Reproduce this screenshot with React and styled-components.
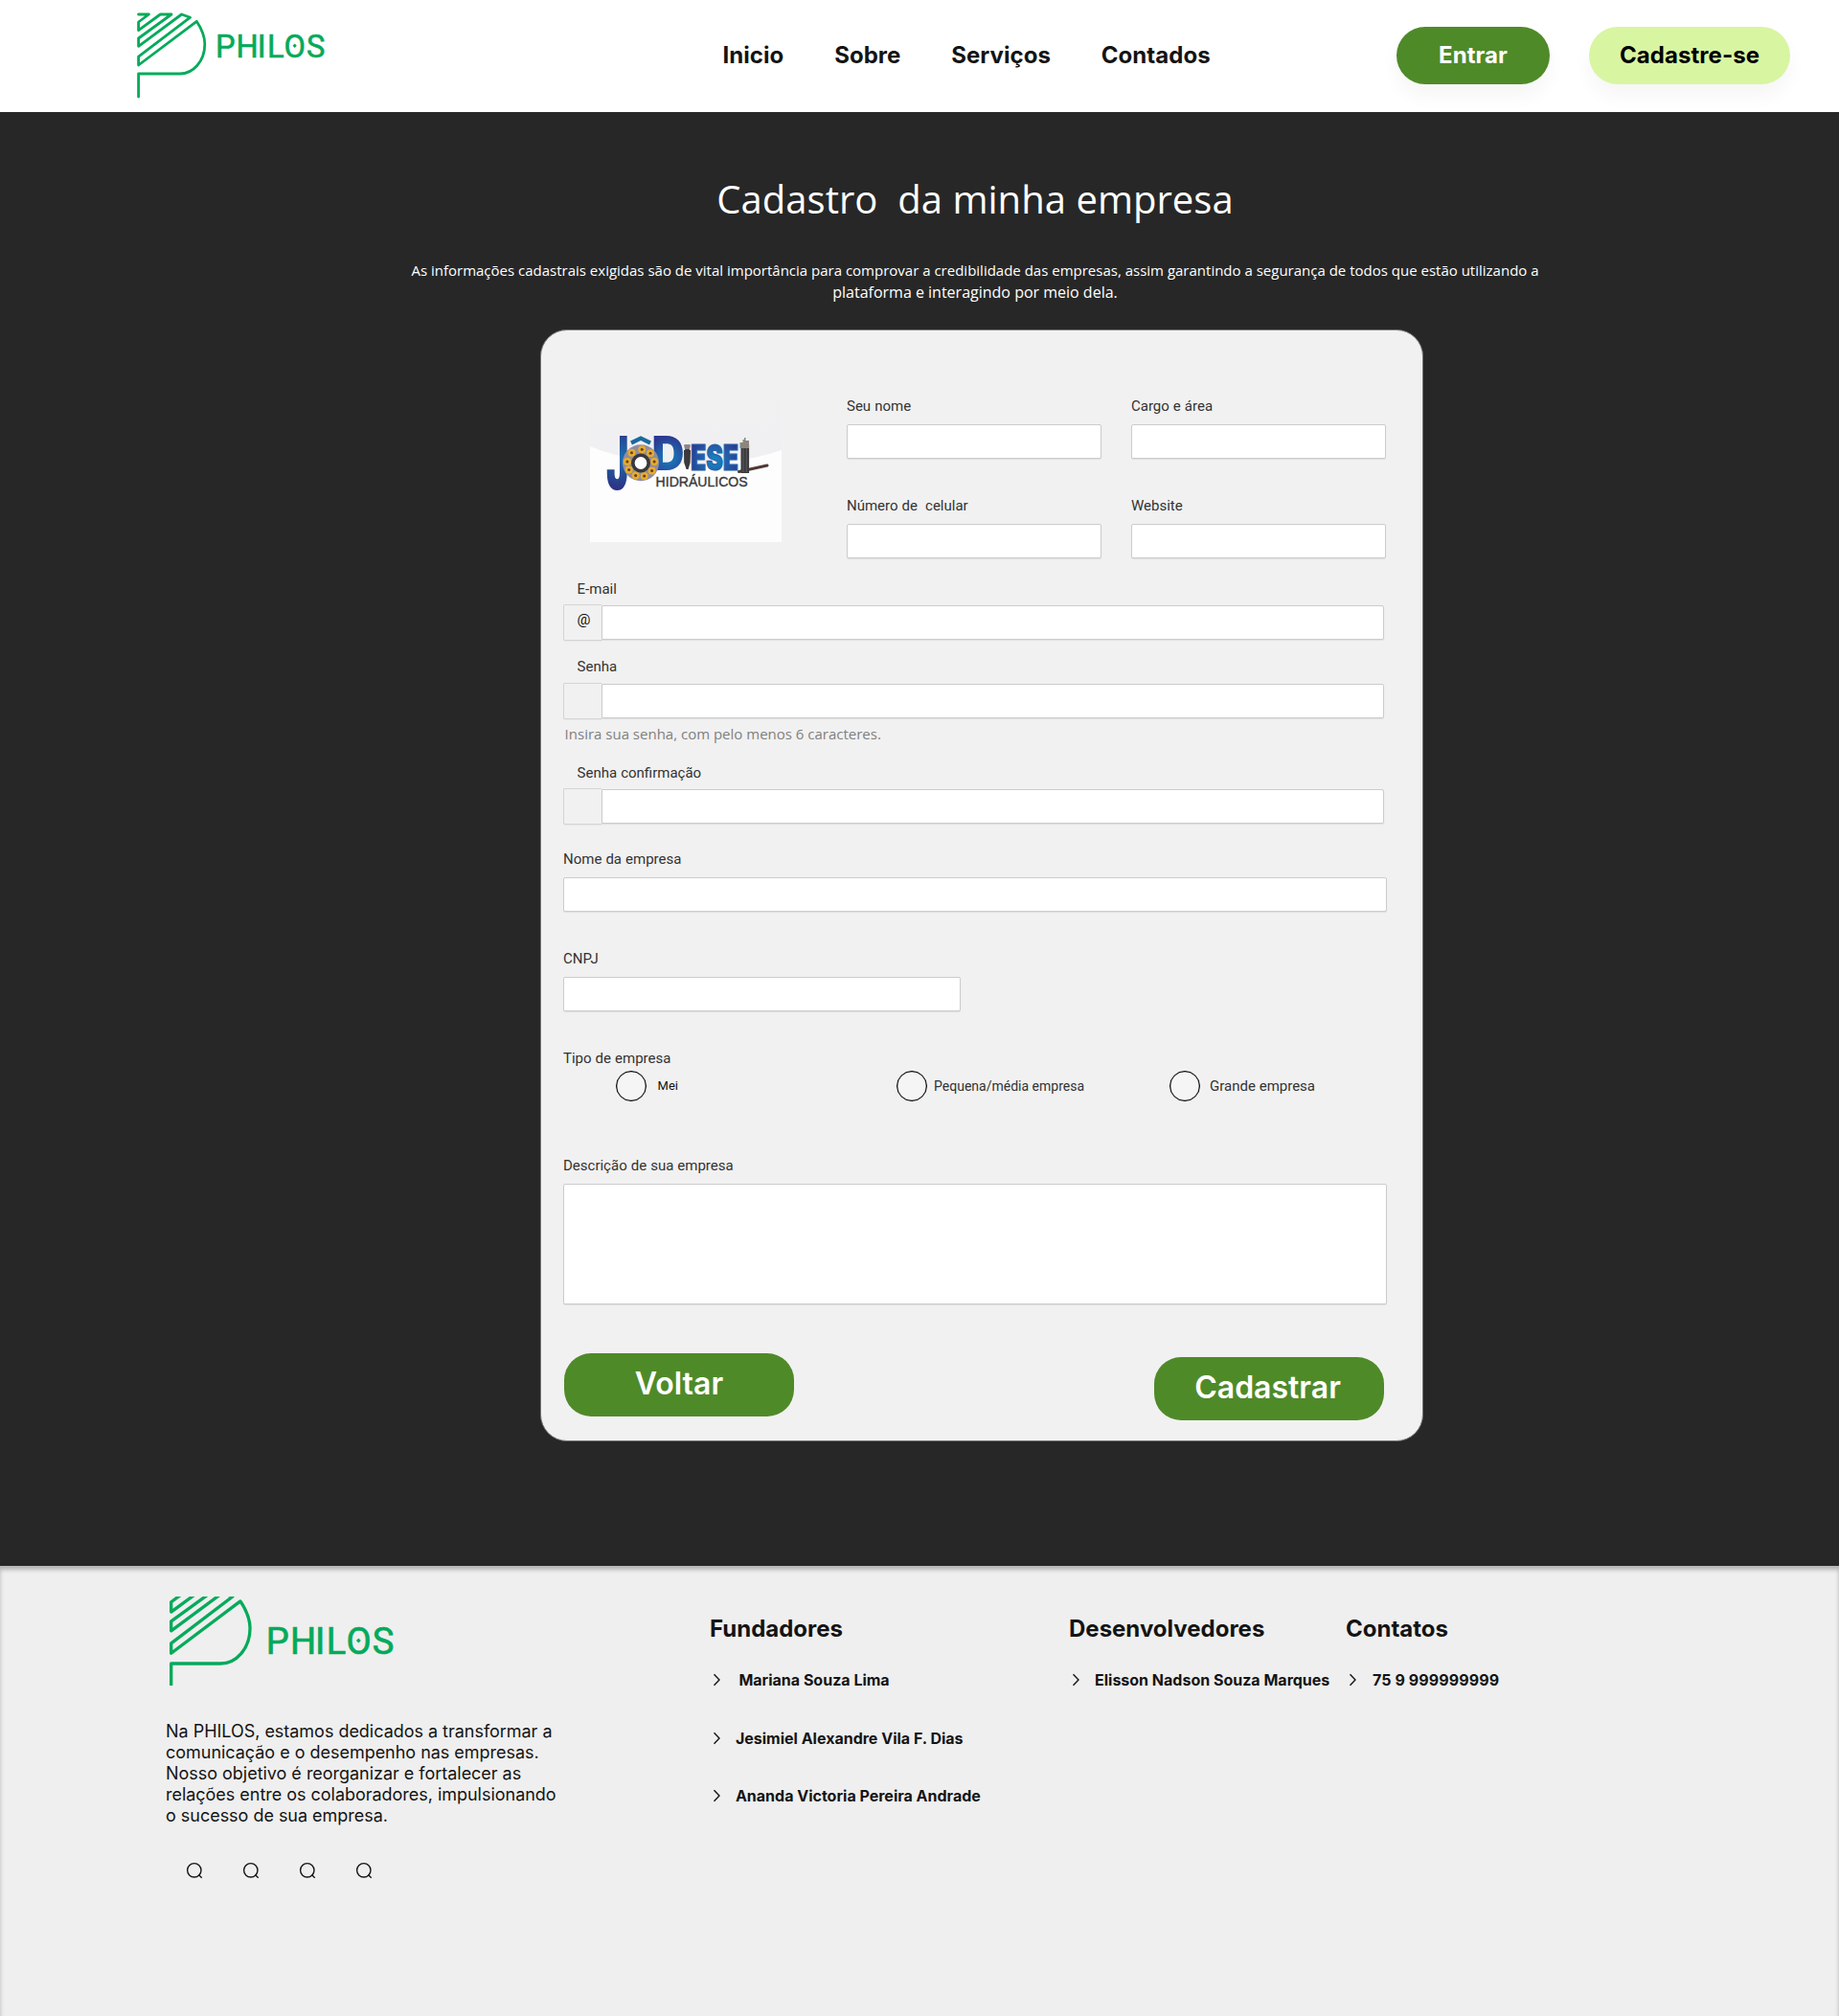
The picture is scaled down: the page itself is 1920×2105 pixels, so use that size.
import React from "react";
import styled, { createGlobalStyle } from "styled-components";

const GlobalStyle = createGlobalStyle`
  *, *::before, *::after { box-sizing: border-box; }
  body {
    margin: 0;
    background: #272727;
    font-family: Inter, "Liberation Sans", sans-serif;
  }
  p, h1, h2, ul { margin: 0; padding: 0; }
`;

const Page = styled.div`
  width: 1920px;
  min-height: 2105px;
  display: flex;
  flex-direction: column;
`;

/* ---------- Header ---------- */

const Header = styled.header`
  height: 117px;
  flex: none;
  display: flex;
  align-items: flex-start;
  padding-left: 140px;
  background: #fff;
  overflow: hidden;
`;

const HeaderBrand = styled.div`
  width: 614px;
  height: 117px;
  svg { display: block; }
`;

const Nav = styled.nav`
  width: 704px;
  display: flex;
  gap: 52.8px;
  padding: 43px 0 0 0.5px;
`;

const NavLink = styled.a`
  font-size: 24px;
  line-height: 29px;
  font-weight: 700;
  letter-spacing: 0.05px;
  color: #141414;
  text-decoration: none;
`;

const HeaderActions = styled.div`
  display: flex;
  gap: 41px;
  padding-top: 28px;
`;

const PillButton = styled.button`
  width: ${(p) => p.$width}px;
  height: 60px;
  padding: 0 0 1px;
  border: 0;
  border-radius: 30px;
  background: ${(p) => (p.$light ? "#d8f5a2" : "#4f8a29")};
  color: ${(p) => (p.$light ? "#000" : "#fff")};
  font: 700 24px/29px Inter, "Liberation Sans", sans-serif;
  letter-spacing: 0.06px;
  box-shadow: 0 12px 20px rgba(0, 0, 0, 0.04);
`;

/* ---------- Main ---------- */

const Main = styled.main`
  height: 1518px;
  flex: none;
  padding-top: 63px;
  background: #272727;
`;

const Intro = styled.section`
  width: 1240px;
  margin-left: 398px;
  height: 164px;
  text-align: center;
  color: #fff;
  font-family: "Open Sans", "Noto Sans", sans-serif;
`;

const Title = styled.h1`
  font-size: 40px;
  line-height: 55px;
  font-weight: 400;
  letter-spacing: 0.03px;
  white-space: pre;
`;

const Lead = styled.p`
  margin-top: ${(p) => p.$top || 0}px;
  font-size: ${(p) => p.$size}px;
  line-height: 23px;
  white-space: nowrap;
`;

const Card = styled.form`
  width: 922px;
  height: 1161px;
  margin-left: 564px;
  padding: 21px 0 0 23px;
  border: 1px solid #777;
  border-radius: 28px;
  background: #f1f1f1;
  display: flex;
  flex-direction: column;
  align-items: flex-start;
`;

const TopRow = styled.div`
  height: 217px;
  display: flex;
  gap: 68px;
  padding-left: 28px;
`;

const Photo = styled.div`
  width: 200px;
  height: 200px;
  svg { display: block; }
`;

const FieldGrid = styled.div`
  display: grid;
  grid-template-columns: 266px 266px;
  align-content: start;
  gap: 40px 31px;
  padding-top: 49px;
`;

const Field = styled.div`
  display: flex;
  flex-direction: column;
  gap: ${(p) => p.$gap || 10}px;
  margin-top: ${(p) => p.$top || 0}px;
  width: ${(p) => (p.$width ? p.$width + "px" : "auto")};
`;

const Label = styled.label`
  height: 18px;
  padding-left: ${(p) => p.$indent || 0}px;
  font: 400 15px/18px Roboto, "Liberation Sans", sans-serif;
  word-spacing: 0.3px;
  color: #333;
  white-space: pre;
`;

const Input = styled.input`
  display: block;
  width: 100%;
  height: 36px;
  padding: 0 10px;
  border: 1px solid #ccc;
  border-radius: 2px;
  background: #fff;
  box-shadow: 0 1px 1px rgba(0, 0, 0, 0.08);
`;

const TextArea = styled.textarea`
  display: block;
  width: 100%;
  height: 126px;
  padding: 10px;
  border: 1px solid #ccc;
  border-radius: 2px;
  background: #fff;
  resize: none;
  box-shadow: 0 1px 1px rgba(0, 0, 0, 0.08);
`;

const AddonRow = styled.div`
  display: flex;
  align-items: center;
  input {
    flex: 1;
    border-radius: 0 2px 2px 0;
  }
`;

const Addon = styled.span`
  width: 40px;
  height: 38px;
  padding: 6px 0 0 13.6px;
  border: 1px solid #d4d4d4;
  border-right: 0;
  border-radius: 2px 0 0 2px;
  background: #f1f1f1;
  box-shadow: 0 1px 1px rgba(0, 0, 0, 0.04);
  font: 400 15.5px/19px Roboto, "Liberation Sans", sans-serif;
  color: #111;
`;

const Hint = styled.p`
  margin: 5px 0 0 1.6px;
  font: 400 15px/20px "Open Sans", "Noto Sans", sans-serif;
  color: #808080;
`;

const RadioRow = styled.div`
  display: flex;
  margin-top: 4px;
  padding-left: 55px;
`;

const RadioOption = styled.label`
  width: ${(p) => p.$width}px;
  display: flex;
  align-items: center;
  gap: ${(p) => p.$gap}px;
  color: ${(p) => p.$color || "#333"};
  font: 400 ${(p) => p.$size}px/${(p) => p.$line || 18}px Roboto, "Liberation Sans", sans-serif;
`;

const RadioCircle = styled.input.attrs({ type: "radio", name: "tipo" })`
  appearance: none;
  flex: none;
  width: 32px;
  height: 32px;
  margin: 0;
  border: 1px solid #000;
  border-radius: 50%;
  background: #f5f5f5;
  box-shadow: inset 0 0 0 0.5px rgba(0, 0, 0, 0.5);
`;

const Actions = styled.div`
  width: 856px;
  margin: 51px 0 0 1px;
  display: flex;
  justify-content: space-between;
  align-items: flex-start;
`;

const ActionButton = styled.button`
  width: 240px;
  height: 66.4px;
  margin-top: ${(p) => p.$drop || 0}px;
  padding: 0 ${(p) => p.$right || 0}px 3px 0;
  border: 0;
  border-radius: 28px;
  background: #4f8a29;
  color: #fff;
  font: 600 32px/39px Inter, "Liberation Sans", sans-serif;
`;

/* ---------- Footer ---------- */

const Footer = styled.footer`
  height: 470px;
  flex: none;
  display: grid;
  grid-template-columns: 568px 375px 289px 1fr;
  padding-left: 173px;
  background: #efefef;
  box-shadow: inset 0 4px 4px rgba(0, 0, 0, 0.25);
  color: #141414;
`;

const About = styled.section`
  padding-top: 32px;
  > svg { display: block; }
`;

const AboutText = styled.p`
  width: 414px;
  margin-top: 36.5px;
  font-size: 18px;
  line-height: 22px;
  letter-spacing: -0.025px;
`;

const SocialRow = styled.div`
  display: flex;
  gap: 39px;
  margin-top: 36px;
  padding-left: 20px;
  svg { display: block; }
`;

const LinkColumn = styled.section`
  padding-top: 51px;
`;

const ColumnTitle = styled.h2`
  font-size: 24px;
  line-height: 29px;
  font-weight: 700;
`;

const LinkList = styled.ul`
  list-style: none;
  margin-top: 29px;
  display: flex;
  flex-direction: column;
  gap: 40.6px;
`;

const LinkItem = styled.li`
  height: 20px;
  display: flex;
  align-items: center;
  gap: ${(p) => p.$gap || 15}px;
  padding-left: 3.4px;
  font-size: 16px;
  line-height: 20px;
  font-weight: 700;
  letter-spacing: ${(p) => p.$spacing || 0}px;
  white-space: nowrap;
  svg { display: block; flex: none; }
`;

/* ---------- Drawings ---------- */

const GREEN = "#05aa5b";

function PhilosMark() {
  return (
    <path
      d="M0 -62H10.8L0 -54V-45.3L22.8 -62H34.4L0 -37V-28.7L45 -62L54 -58.8L0 -17.8V-9L60.7 -54.7C66.5 -46 69.2 -38.5 69.2 -31C69.2 -13 57 0 43.3 0H0V24"
      fill="none"
      stroke={GREEN}
      strokeWidth="2.8"
      strokeLinejoin="round"
      strokeLinecap="round"
    />
  );
}

function PhilosWord() {
  return (
    <g fill={GREEN}>
      <text
        x="-2 19.6 41.8 52 69.6 93"
        y="0"
        fontFamily="Roboto, sans-serif"
        fontSize="32.6"
        stroke={GREEN}
        strokeWidth="0.6"
      >
        PHILOS
      </text>
      <path d="M80.7 -14.2L82.8 -12L80.7 -9.8L78.6 -12Z" />
    </g>
  );
}

function HeaderLogo() {
  return (
    <svg width="210" height="110" viewBox="140 0 210 110" role="img">
      <g transform="translate(144.6 77)"><PhilosMark /></g>
      <g transform="translate(227 59.8)"><PhilosWord /></g>
    </svg>
  );
}

function FooterLogo() {
  return (
    <svg width="250" height="93" viewBox="173 1667 250 93" role="img">
      <g transform="translate(178.7 1737) scale(1.19)"><PhilosMark /></g>
      <g transform="translate(280.2 1727) scale(1.167)"><PhilosWord /></g>
    </svg>
  );
}

const BALLS = [85, 45, 5, -35, -75, -112, -150, 175, 132];

function CompanyPhoto() {
  return (
    <svg width="200" height="200" viewBox="0 0 200 200" role="img">
      <defs>
        <linearGradient id="haze" x1="0" y1="0" x2="0" y2="1">
          <stop offset="0" stopColor="#f1f1f1" />
          <stop offset="0.5" stopColor="#f0f0f2" />
        </linearGradient>
        <radialGradient id="blueJ" gradientUnits="userSpaceOnUse" cx="32" cy="112" r="36">
          <stop offset="0" stopColor="#1a6fb0" />
          <stop offset="1" stopColor="#2f2c80" />
        </radialGradient>
        <radialGradient id="blueD" gradientUnits="userSpaceOnUse" cx="82" cy="112" r="22">
          <stop offset="0" stopColor="#1583bf" />
          <stop offset="1" stopColor="#2c3a92" />
        </radialGradient>
        <radialGradient id="blueE" gradientUnits="userSpaceOnUse" cx="130" cy="115" r="28">
          <stop offset="0" stopColor="#1689c4" />
          <stop offset="1" stopColor="#2d3690" />
        </radialGradient>
      </defs>
      <rect width="200" height="200" fill="url(#haze)" />
      <path d="M0 100C60 124 140 124 200 104V200H0Z" fill="#fdfdfe" />
      <g fontFamily="Inter, sans-serif" fontWeight="900">
        <text x="17" y="145" fontSize="77" textLength="23.5" lengthAdjust="spacingAndGlyphs" fill="url(#blueJ)">J</text>
        <text x="64.5" y="125.2" fontSize="49" textLength="34" lengthAdjust="spacingAndGlyphs" fill="url(#blueD)">D</text>
        <text x="105" y="125.4" fontSize="37.5" textLength="50" lengthAdjust="spacingAndGlyphs" fill="url(#blueE)" stroke="#2560a8" strokeWidth="1.2">ESE</text>
      </g>
      <path d="M43 96.5L53 91.5L63 96.5" fill="none" stroke="#1a6a9c" strokeWidth="4.2" />
      <circle cx="53" cy="117.3" r="19" fill="#938ba0" />
      {BALLS.map((deg) => {
        const a = (deg * Math.PI) / 180;
        const x = 53 + 14.2 * Math.cos(a);
        const y = 117.3 - 14.2 * Math.sin(a);
        return (
          <g key={deg}>
            <circle cx={x} cy={y} r="4" fill="#e2ae2c" />
            <circle cx={x} cy={y} r="1.5" fill="#6e3a22" />
          </g>
        );
      })}
      <circle cx="53" cy="117.5" r="8.2" fill="#fdfdfe" stroke="#3a383c" strokeWidth="3.6" />
      <path d="M98.5 98.5H104.5L103.8 104H105L104.6 117L102.6 124H100.6L98.2 117L98 104H99.2Z" fill="#3a393d" />
      <path d="M98.5 98.5H104.5L104 103H99Z" fill="#8b8592" />
      <path d="M155.5 126.5L185 120" stroke="#4f3834" strokeWidth="3" strokeLinecap="round" />
      <rect x="157.5" y="98" width="8.6" height="30" fill="#3b3a3c" />
      <path d="M160 100V127M163.3 100V127" stroke="#66646a" strokeWidth="0.8" />
      <path d="M156.5 96H159.5V93H161V91H162.5V94H166V102H156.5Z" fill="#8c867f" />
      <text x="68.6" y="141.6" fontFamily="Liberation Sans, Arial, sans-serif" fontSize="15" textLength="96" lengthAdjust="spacingAndGlyphs" fill="#39393b" stroke="#39393b" strokeWidth="0.4">HIDRÁULICOS</text>
    </svg>
  );
}

function Chevron() {
  return (
    <svg width="8" height="14" viewBox="0 0 8 14">
      <path d="M1.5 1.2L7 7L1.5 12.8" fill="none" stroke="#141414" strokeWidth="1.4" />
    </svg>
  );
}

function SocialIcon() {
  return (
    <svg width="20" height="20" viewBox="0 0 20 20">
      <circle cx="9.8" cy="9.8" r="7.2" fill="none" stroke="#141414" strokeWidth="1.4" />
      <path d="M14.4 14.4L17.7 17.7" stroke="#141414" strokeWidth="1.4" />
    </svg>
  );
}

/* ---------- Composition ---------- */

function TextField({ label, ...box }) {
  return (
    <Field {...box}>
      <Label>{label}</Label>
      <Input />
    </Field>
  );
}

function AddonField({ label, symbol, type, ...box }) {
  return (
    <Field $width={857} {...box}>
      <Label $indent={14.6}>{label}</Label>
      <AddonRow>
        <Addon>{symbol}</Addon>
        <Input type={type} />
      </AddonRow>
    </Field>
  );
}

function FooterColumn({ title, items }) {
  return (
    <LinkColumn>
      <ColumnTitle>{title}</ColumnTitle>
      <LinkList>
        {items.map(([text, gap, spacing]) => (
          <LinkItem key={text} $gap={gap} $spacing={spacing}>
            <Chevron />
            {text}
          </LinkItem>
        ))}
      </LinkList>
    </LinkColumn>
  );
}

export default function App() {
  return (
    <Page>
      <GlobalStyle />
      <Header>
        <HeaderBrand><HeaderLogo /></HeaderBrand>
        <Nav>
          {["Inicio", "Sobre", "Serviços", "Contados"].map((item) => (
            <NavLink key={item}>{item}</NavLink>
          ))}
        </Nav>
        <HeaderActions>
          <PillButton $width={160}>Entrar</PillButton>
          <PillButton $width={210} $light>Cadastre-se</PillButton>
        </HeaderActions>
      </Header>

      <Main>
        <Intro>
          <Title>{"Cadastro  da minha empresa"}</Title>
          <Lead $size={15} $top={36}>
            As informações cadastrais exigidas são de vital importância para comprovar a credibilidade das empresas, assim garantindo a segurança de todos que estão utilizando a
          </Lead>
          <Lead $size={16}>plataforma e interagindo por meio dela.</Lead>
        </Intro>

        <Card>
          <TopRow>
            <Photo><CompanyPhoto /></Photo>
            <FieldGrid>
              <TextField label="Seu nome" />
              <TextField label="Cargo e área" />
              <TextField label={"Número de  celular"} />
              <TextField label="Website" />
            </FieldGrid>
          </TopRow>
          <AddonField label="E-mail" symbol="@" $top={23} $gap={7} />
          <AddonField label="Senha" type="password" $top={18} $gap={8} />
          <Hint>Insira sua senha, com pelo menos 6 caracteres.</Hint>
          <AddonField label="Senha confirmação" type="password" $top={22} $gap={7} />
          <TextField label="Nome da empresa" $top={27} $width={860} />
          <TextField label="CNPJ" $top={40} $width={415} />
          <Field $top={40}>
            <Label>Tipo de empresa</Label>
          </Field>
          <RadioRow>
            <RadioOption $width={293} $gap={11.6} $size={13} $line={20} $color="#111"><RadioCircle />Mei</RadioOption>
            <RadioOption $width={285} $gap={7.1} $size={14}><RadioCircle />Pequena/média empresa</RadioOption>
            <RadioOption $width={200} $gap={10.1} $size={15}><RadioCircle />Grande empresa</RadioOption>
          </RadioRow>
          <Field $top={58} $width={860}>
            <Label>Descrição de sua empresa</Label>
            <TextArea />
          </Field>
          <Actions>
            <ActionButton type="button">Voltar</ActionButton>
            <ActionButton type="button" $drop={4} $right={3}>Cadastrar</ActionButton>
          </Actions>
        </Card>
      </Main>

      <Footer>
        <About>
          <FooterLogo />
          <AboutText>
            Na PHILOS, estamos dedicados a transformar a comunicação e o desempenho nas empresas. Nosso objetivo é reorganizar e fortalecer as relações entre os colaboradores, impulsionando o sucesso de sua empresa.
          </AboutText>
          <SocialRow>
            <SocialIcon />
            <SocialIcon />
            <SocialIcon />
            <SocialIcon />
          </SocialRow>
        </About>
        <FooterColumn
          title="Fundadores"
          items={[
            ["Mariana Souza Lima", 19],
            ["Jesimiel Alexandre Vila F. Dias", 15.5],
            ["Ananda Victoria Pereira Andrade", 15.5],
          ]}
        />
        <FooterColumn title="Desenvolvedores" items={[["Elisson Nadson Souza Marques", 15.6]]} />
        <FooterColumn title="Contatos" items={[["75 9 999999999", 16.6, 0.1]]} />
      </Footer>
    </Page>
  );
}
